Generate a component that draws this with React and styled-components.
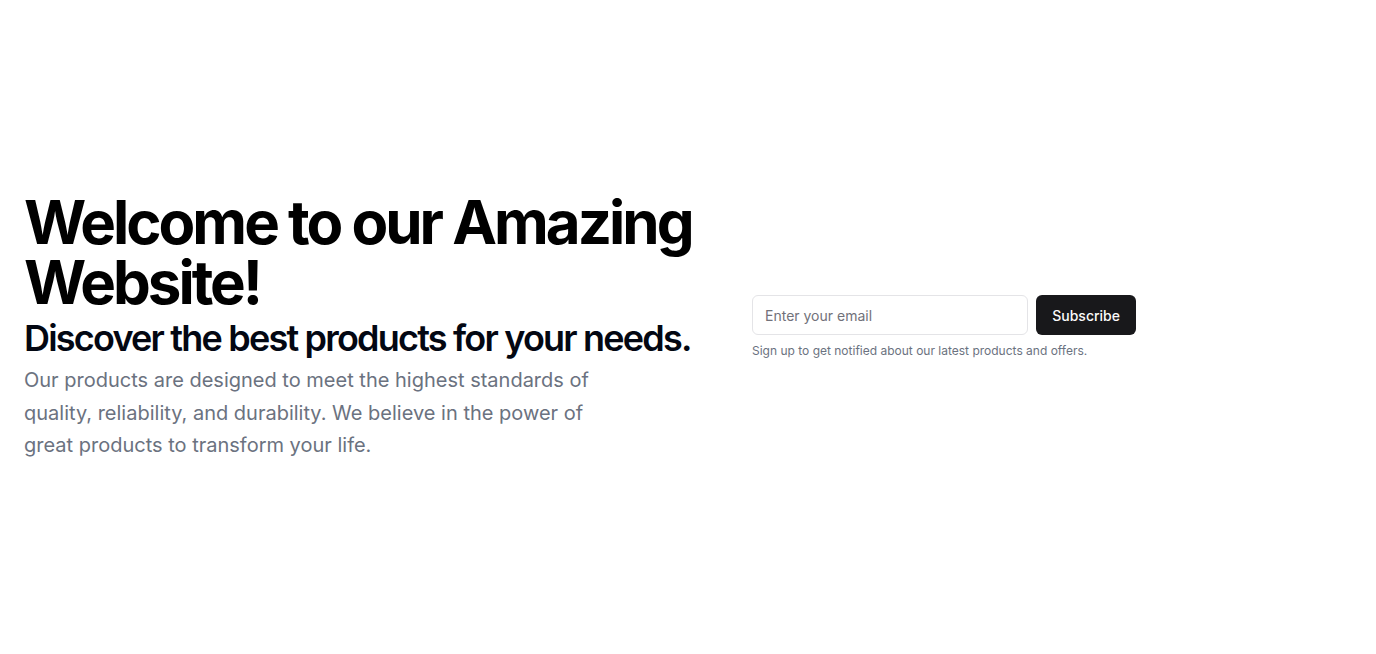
import React from "react";
import styled, { createGlobalStyle } from "styled-components";

const GlobalStyle = createGlobalStyle`
  * { box-sizing: border-box; }
  html, body { margin: 0; padding: 0; background: #ffffff; }
  body { font-family: Inter, "Noto Sans", sans-serif; color: #09090b; }
`;

const Page = styled.section`
  min-height: 100vh;
  display: grid;
  grid-template-columns: 1fr 600px;
  gap: 24px;
  align-items: center;
  padding: 0 24px;
`;

const Intro = styled.div`
  display: flex;
  flex-direction: column;
`;

const Title = styled.h1`
  margin: 0;
  font-size: 60px;
  line-height: 1;
  font-weight: 700;
  letter-spacing: -0.05em;
  color: #000;
`;

const Subtitle = styled.h2`
  margin: 6px 0 0;
  font-size: 36px;
  line-height: 40px;
  font-weight: 600;
  letter-spacing: -0.05em;
  color: #030712;
`;

const Lead = styled.p`
  margin: 6px 0 0;
  max-width: 600px;
  font-size: 20px;
  line-height: 32.5px;
  color: #6b7280;
`;

const SignUp = styled.div`
  width: 384px;
  display: flex;
  flex-direction: column;
  gap: 8px;
`;

const Form = styled.form`
  display: flex;
  gap: 8px;
`;

const EmailInput = styled.input`
  flex: 1;
  min-width: 0;
  height: 40px;
  padding: 8px 12px;
  border: 1px solid #e4e4e7;
  border-radius: 6px;
  font-family: Inter, sans-serif;
  font-size: 14px;
  color: #09090b;
  background: #fff;
  outline: none;
  &::placeholder { color: #71717a; }
`;

const Button = styled.button`
  height: 40px;
  padding: 0 16px;
  border: none;
  border-radius: 6px;
  background: #18181b;
  color: #fafafa;
  font-family: Inter, sans-serif;
  font-size: 14px;
  font-weight: 500;
  cursor: pointer;
`;

const Note = styled.p`
  margin: 0;
  font-size: 12px;
  line-height: 16px;
  color: #6b7280;
`;

export default function App() {
  return (
    <>
      <GlobalStyle />
      <Page>
        <Intro>
          <Title>Welcome to our Amazing Website!</Title>
          <Subtitle>Discover the best products for your needs.</Subtitle>
          <Lead>
            Our products are designed to meet the highest standards of quality,
            reliability, and durability. We believe in the power of great products
            to transform your life.
          </Lead>
        </Intro>
        <SignUp>
          <Form onSubmit={(e) => e.preventDefault()}>
            <EmailInput type="email" placeholder="Enter your email" />
            <Button type="submit">Subscribe</Button>
          </Form>
          <Note>Sign up to get notified about our latest products and offers.</Note>
        </SignUp>
      </Page>
    </>
  );
}
